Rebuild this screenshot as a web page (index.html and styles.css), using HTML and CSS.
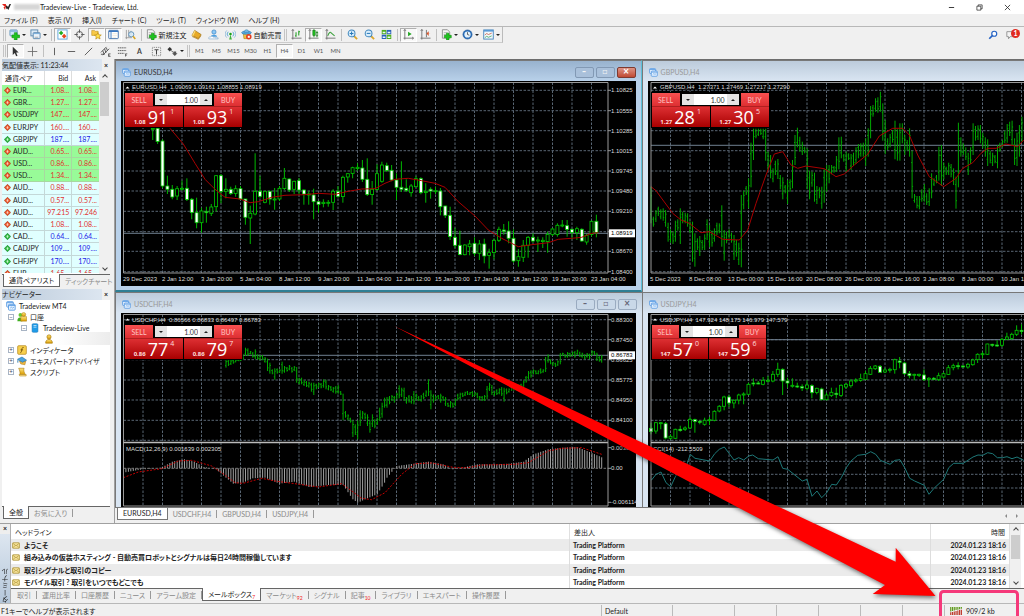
FILE: index.html
```html
<!DOCTYPE html>
<html lang="ja">
<head>
<meta charset="utf-8">
<title>Tradeview-Live - Tradeview, Ltd.</title>
<link rel="stylesheet" href="styles.css">
</head>
<body>
<svg class="defs" width="0" height="0" aria-hidden="true">
  <linearGradient id="gold" x1="0" y1="0" x2="0" y2="1"><stop offset="0" stop-color="#ffe680"/><stop offset="1" stop-color="#d99a00"/></linearGradient>
  <symbol id="i-newchart" viewBox="0 0 12 12"><rect x="1" y="1" width="8" height="6.500" rx=".8" fill="#cfe6f8" stroke="#5b8fb8" stroke-width=".9"/><path d="M1.500 2.300h7" stroke="#5b9ad0"/><path d="M5.800 4h3v2.500h2.700v3H8.800V12H5.800V9.500H3.200v-3H5.800z" fill="#1fc41f" stroke="#0a8a0a" stroke-width=".6"/></symbol>
  <symbol id="i-windows" viewBox="0 0 12 12"><rect x="1" y="1" width="7.500" height="6.500" fill="#dceaf6" stroke="#5b87ad"/><rect x="3.500" y="4" width="7.500" height="6.500" rx=".6" fill="#eaf3fa" stroke="#5b87ad"/><path d="M3.500 5h7.500" stroke="#6fa6d6"/><path d="M5 9h4" stroke="#aaa"/></symbol>
  <symbol id="i-watch" viewBox="0 0 12 12"><rect x="1" y="1" width="10" height="10" fill="#fff" stroke="#5da5dd"/><path d="M4.500 1.800L7 4.300 4.500 6.800 2 4.300z" fill="#1fae1f"/><path d="M7.800 5.300l2.500 2.500-2.500 2.500-2.500-2.500z" fill="#e8451c"/></symbol>
  <symbol id="i-cross" viewBox="0 0 12 12"><circle cx="6" cy="6" r="3.300" fill="none" stroke="#555"/><path d="M6 .5v3.700M6 7.800v3.700M.5 6h3.700M7.800 6h3.700" stroke="#555"/></symbol>
  <symbol id="i-navfold" viewBox="0 0 12 12"><path d="M.8 1.500h3l1 1h3v4.500h-7z" fill="#f7c948" stroke="#b58a1e" stroke-width=".6"/><path d="M7.500 4l1.100 2.400 2.600.2-2 1.700.7 2.600-2.400-1.400L5.200 11l.6-2.600-2-1.700 2.600-.3z" fill="#ffdf4d" stroke="#b8860b" stroke-width=".7"/></symbol>
  <symbol id="i-term" viewBox="0 0 12 12"><rect x=".8" y="1.500" width="10.400" height="9" rx=".8" fill="#fff" stroke="#3f6fa8"/><path d="M1 2.500h10" stroke="#3a78c2" stroke-width="1.500"/><path d="M3.300 3v7.500" stroke="#3a78c2"/><path d="M4.800 5h5M4.800 7h5M4.800 9h4" stroke="#f0e8d8" stroke-width=".8"/></symbol>
  <symbol id="i-tester" viewBox="0 0 12 12"><path d="M1.500 1v10M.5 9.500h7M4 1v8M6.500 2v5" stroke="#8a8a8a" stroke-width=".8"/><circle cx="6.800" cy="5.800" r="2.800" fill="#d8ecfa" fill-opacity=".8" stroke="#5b8fb8"/><path d="M8.800 8l2.400 3" stroke="#d9a520" stroke-width="1.700"/></symbol>
  <symbol id="i-order" viewBox="0 0 12 12"><path d="M1.500.8h5.500l2.500 2.500v6.700h-8z" fill="#f4f4f4" stroke="#777" stroke-width=".8"/><path d="M3 4h4M3 6h3" stroke="#999" stroke-width=".7"/><path d="M6 4.500h2.700v2.400h2.500v2.700H8.700V12H6V9.600H3.600V6.900H6z" fill="#1fc41f" stroke="#0a8a0a" stroke-width=".6"/></symbol>
  <symbol id="i-book" viewBox="0 0 12 12"><path d="M4 1.500l7 4.500-3 4.500L1 7z" fill="#e8aa28" stroke="#9a6a0a" stroke-width=".7"/><path d="M1 7l3-5.500 1 .6L2.500 7.500z" fill="#fbdc7a"/><path d="M1.300 8.200L8 11.200l3-4" fill="none" stroke="#b57c10" stroke-width=".8"/></symbol>
  <symbol id="i-person" viewBox="0 0 12 12"><circle cx="6.500" cy="3.300" r="2.300" fill="#8cc8f5" stroke="#2e7cc0" stroke-width=".7"/><path d="M3 8.500c0-3 7-3 7 0z" fill="#4da0e0"/><path d="M1 10.800c-1-1.500.5-2.500 1.500-2 .8-1.500 3-1 3.200.2 1-.6 2 0 2 .6h3.300v1.200z" fill="#fff" stroke="#6a9bc6" stroke-width=".6"/></symbol>
  <symbol id="i-signal" viewBox="0 0 12 12"><circle cx="6" cy="5.500" r="1.400" fill="#18a018"/><path d="M6 6l1.500 5.500h-3z" fill="#3fb43f"/><path d="M3.500 8a3.500 3.500 0 010-5M8.500 8a3.500 3.500 0 000-5" fill="none" stroke="#3f9ed0" stroke-width=".9"/><path d="M2 9.500a5.300 5.300 0 010-8M10 9.500a5.300 5.300 0 000-8" fill="none" stroke="#8fb8d8" stroke-width=".9"/></symbol>
  <symbol id="i-auto" viewBox="0 0 12 12"><path d="M2.500 5h6l-.8 5.500H3.200z" fill="#f0c040" stroke="#a87810" stroke-width=".6"/><ellipse cx="6" cy="4" rx="5.300" ry="1.800" fill="#5aa9dc" stroke="#1f6fa8" stroke-width=".6"/><path d="M3.500 3.500c0-3.500 5-3.500 5 0z" fill="#7cc0ea" stroke="#1f6fa8" stroke-width=".5"/><circle cx="8.500" cy="8.500" r="3" fill="#e23b20"/><rect x="7.400" y="7.400" width="2.200" height="2.200" fill="#fff"/></symbol>
  <symbol id="i-bars" viewBox="0 0 12 12"><path d="M2 .5v11M.5 10h11M.8 2l1.200-1.500L3.200 2" fill="none" stroke="#666" stroke-width=".9"/><path d="M5.500 3.500v5M4.500 7.500h1M8.500 2v5M8.500 3h1.300" stroke="#1a9a1a" stroke-width="1.100"/></symbol>
  <symbol id="i-candles" viewBox="0 0 12 12"><path d="M2 .5v11M.5 10h11M.8 2l1.200-1.500L3.200 2" fill="none" stroke="#666" stroke-width=".9"/><path d="M6.500 0v9M9.800 2v7" stroke="#107010" stroke-width=".8"/><rect x="5.300" y="1.500" width="2.500" height="5.500" fill="#20c020" stroke="#107010" stroke-width=".6"/><rect x="8.900" y="4" width="1.800" height="3.500" fill="#fff" stroke="#107010" stroke-width=".6"/></symbol>
  <symbol id="i-line" viewBox="0 0 12 12"><path d="M2 .5v11M.5 10h11M.8 2l1.200-1.500L3.200 2" fill="none" stroke="#666" stroke-width=".9"/><path d="M3 7.500C4.500 3 6 3 7 4.500l3.500 3" fill="none" stroke="#3aa03a" stroke-width="1.100"/></symbol>
  <symbol id="i-zin" viewBox="0 0 12 12"><path d="M7.500 7.500l3.500 3.500" stroke="#dba62a" stroke-width="2"/><circle cx="5" cy="4.800" r="3.700" fill="#d9eefc" stroke="#3f86bd" stroke-width="1.100"/><path d="M3 4.800h4M5 2.800v4" stroke="#2878b8" stroke-width="1.100"/></symbol>
  <symbol id="i-zout" viewBox="0 0 12 12"><path d="M7.500 7.500l3.500 3.500" stroke="#dba62a" stroke-width="2"/><circle cx="5" cy="4.800" r="3.700" fill="#d9eefc" stroke="#3f86bd" stroke-width="1.100"/><path d="M3 4.800h4" stroke="#2878b8" stroke-width="1.100"/></symbol>
  <symbol id="i-tile" viewBox="0 0 12 12"><rect x=".8" y="1" width="5" height="4.700" fill="#4fae1c"/><rect x="6.200" y="1" width="5" height="4.700" fill="#2b62b8"/><rect x=".8" y="6.200" width="5" height="4.700" fill="#2b62b8"/><rect x="6.200" y="6.200" width="5" height="4.700" fill="#4fae1c"/><path d="M1.800 3h3v1.600h-3zM7.200 3h3v1.600h-3zM1.800 8.200h3v1.600h-3zM7.200 8.200h3v1.600h-3z" fill="#e8f4ff"/></symbol>
  <symbol id="i-scroll" viewBox="0 0 12 12"><path d="M2 .5v11M.5 10h11M.8 2l1.200-1.500L3.200 2M10 8.800l1.500 1.200-1.500 1.200" fill="none" stroke="#666" stroke-width=".9"/><path d="M5.500 3l4 2.500-4 2.500z" fill="#22a522"/></symbol>
  <symbol id="i-shift" viewBox="0 0 12 12"><path d="M2 .5v11M.5 10h11M.8 2l1.200-1.500L3.200 2M7 1v8" fill="none" stroke="#666" stroke-width=".9"/><path d="M11.500 5H9.500V7.500L7 5l2.500-2.500V4.500" fill="#d8552a"/></symbol>
  <symbol id="i-clock" viewBox="0 0 12 12"><circle cx="6" cy="6" r="5" fill="#2a70bd" stroke="#174f8e" stroke-width=".6"/><circle cx="6" cy="6" r="3.400" fill="#e4f2fc"/><path d="M6 3.500V6l2 .8" fill="none" stroke="#333" stroke-width=".8"/></symbol>
  <symbol id="i-template" viewBox="0 0 12 12"><rect x=".8" y="1" width="10.400" height="10" fill="#f2f8fd" stroke="#4684bd"/><path d="M1 2h10" stroke="#4f94d4" stroke-width="1.600"/><path d="M2 6.500l2-1.500 2 1 3.500-1.500" fill="none" stroke="#c05030" stroke-width=".8"/><path d="M2 9.500l2-1.500 2 1 3.500-1.500" fill="none" stroke="#2f9f4f" stroke-width=".8"/></symbol>
  <symbol id="i-arrow" viewBox="0 0 12 12"><path d="M3 .8l6.500 6.300H6.700l1.500 3.400-1.500.7-1.500-3.500L3 9.700z" fill="#333"/></symbol>
  <symbol id="i-plusline" viewBox="0 0 12 12"><path d="M6 .8v10.400M.8 6h10.400" stroke="#666" stroke-width=".9"/></symbol>
  <symbol id="i-vline" viewBox="0 0 12 12"><path d="M6 2v8" stroke="#555"/></symbol>
  <symbol id="i-hline" viewBox="0 0 12 12"><path d="M2 6h8" stroke="#555"/></symbol>
  <symbol id="i-trend" viewBox="0 0 12 12"><path d="M2 10l8-8" stroke="#555"/></symbol>
  <symbol id="i-channel" viewBox="0 0 12 12"><path d="M1 7l6-6M3 10l7-7M3 5l1.500 4M5 3l1.500 4.500M7 2l1 3M1 9h4" stroke="#444" stroke-width=".9"/><path d="M11.500 8.500H9.300v3h2.200M9.300 10h1.800" fill="none" stroke="#333" stroke-width=".7"/></symbol>
  <symbol id="i-fibo" viewBox="0 0 12 12"><path d="M1 2h9M1 5h9M1 8h7" stroke="#555" stroke-dasharray="1.500 .5"/><path d="M11.200 8.500H9.300v3M9.300 10h1.500" fill="none" stroke="#333" stroke-width=".7"/></symbol>
  <symbol id="i-label" viewBox="0 0 12 12"><rect x="1.500" y="1.500" width="9" height="9" fill="none" stroke="#777" stroke-dasharray="1 1"/><path d="M3.800 4.200h4.400M6 4.200v5" stroke="#444" stroke-width="1.100"/></symbol>
  <symbol id="i-shapes" viewBox="0 0 12 12"><path d="M3 1l2.500 2.500L3 6 .5 3.500z" fill="#333"/><path d="M4.500 5l2.500 2" stroke="#333" stroke-width=".8"/><path d="M7 6h3v2h1.500L8.500 11 5.500 8H7z" fill="#555"/></symbol>
  <symbol id="i-chartwin" viewBox="0 0 12 12"><rect x=".8" y=".8" width="8" height="6.500" rx="1" fill="#e8f3ff" stroke="#4b93e0"/><path d="M1 2h7.500" stroke="#4b93e0"/><rect x="3" y="4" width="8" height="7" rx="1" fill="#e8f3ff" stroke="#4b93e0"/><path d="M3 5.500h8" stroke="#4b93e0"/><path d="M5 8.500l1.500-1 1.500 1 1.500-1" fill="none" stroke="#4b93e0" stroke-width=".8"/></symbol>
  <symbol id="i-down" viewBox="0 0 12 12"><path d="M6 .5L11.500 6 6 11.500.5 6z" fill="#e8532a" stroke="#a8300e"/><path d="M5 4h2v2h1.500L6 8.500 3.500 6H5z" fill="#ffc9b5"/></symbol>
  <symbol id="i-up" viewBox="0 0 12 12"><path d="M6 .5L11.500 6 6 11.500.5 6z" fill="#2fb83f" stroke="#0c7a20"/><path d="M5 8h2V6h1.500L6 3.500 3.500 6H5z" fill="#c4f3c8"/></symbol>
  <symbol id="i-user" viewBox="0 0 12 12"><circle cx="6" cy="3.500" r="2.500" fill="url(#gold)" stroke="#a87808" stroke-width=".8"/><path d="M2 11c-.5-6 8.500-6 8 0z" fill="url(#gold)" stroke="#a87808" stroke-width=".8"/></symbol>
  <symbol id="i-users" viewBox="0 0 12 12"><circle cx="4" cy="3.500" r="2.200" fill="#65c832"/><path d="M.5 11c-.5-6 6-6 6 0z" fill="#3fae1e"/><circle cx="8" cy="3" r="2.400" fill="url(#gold)" stroke="#a87808" stroke-width=".6"/><path d="M4.500 11V5.500h7V11z" fill="url(#gold)" stroke="#a87808" stroke-width=".6"/></symbol>
  <symbol id="i-server" viewBox="0 0 12 12"><rect x="2.500" y=".8" width="7" height="10.400" rx="1.300" fill="#1e9be8" stroke="#1270b4" stroke-width=".6"/><path d="M4.200 3h3.600M4.200 5h3.600" stroke="#d8f0ff" stroke-width=".9"/></symbol>
  <symbol id="i-ind" viewBox="0 0 12 12"><rect x=".8" y=".8" width="10.400" height="10.400" rx="1.200" fill="#f7cf4d" stroke="#b08010" stroke-width=".8"/><path d="M8 3C6 2.500 6 4 5.700 6S5 9.500 4 9.200M4.300 5.800h3" fill="none" stroke="#604000" stroke-width=".9"/></symbol>
  <symbol id="i-hat" viewBox="0 0 12 12"><path d="M3 6h7.500l-1 4.500-5-1z" fill="#f0b840" stroke="#a87810" stroke-width=".6"/><path d="M.5 4L6 1.200 11.500 5 6.500 7.500z" fill="#4ba3de" stroke="#1c6ca6" stroke-width=".7"/><path d="M1 5v3" stroke="#1c6ca6"/></symbol>
  <symbol id="i-script" viewBox="0 0 12 12"><path d="M2 1.500h6.500c-1 2 0 5 1.500 7.500H3.500C4 6 3 3.500 2 1.500z" fill="url(#gold)" stroke="#a87808" stroke-width=".7"/><path d="M2.500 9h8.500v1.800H3.300z" fill="#fbe08a" stroke="#a87808" stroke-width=".6"/></symbol>
  <symbol id="i-mail" viewBox="0 0 12 10"><rect x=".8" y=".8" width="10.400" height="8.400" rx="1" fill="#f3df94" stroke="#a68c2e"/><path d="M1.500 1.800L6 5.500l4.500-3.700M1.500 8.500L4.500 5M10.500 8.500L7.500 5" fill="none" stroke="#a68c2e" stroke-width=".9"/></symbol>
</svg>

<header class="titlebar">
  <svg class="logo" viewBox="0 0 12 10"><path d="M0 1h5l1 3-1 1-1 4-2-4h2z" fill="#e2231a"/><path d="M6 8L5 4l1.500-1L8 5l2-4h2L8.500 9 7 7z" fill="#222"/></svg>
  <span class="mask"></span>
  <span class="apptitle">Tradeview-Live - Tradeview, Ltd.</span>
  <div class="winctl">
    <button aria-label="最小化"><svg viewBox="0 0 8 8"><path d="M1 4h6" stroke="#222"/></svg></button>
    <button aria-label="元に戻す"><svg viewBox="0 0 8 8"><path d="M1 2.500h4.500V7H1zM2.500 2.500V1H7v4.500H5.500" fill="none" stroke="#222" stroke-width=".8"/></svg></button>
    <button aria-label="閉じる"><svg viewBox="0 0 8 8"><path d="M1 1l6 6M7 1L1 7" stroke="#222" stroke-width=".9"/></svg></button>
  </div>
</header>

<nav class="menubar">
  <button>ファイル (F)</button><button>表示 (V)</button><button>挿入(I)</button><button>チャート (C)</button><button>ツール (T)</button><button>ウィンドウ (W)</button><button>ヘルプ (H)</button>
</nav>

<div class="toolbar first">
  <div class="tools boxed">
    <i class="grip"></i>
    <button class="drop" aria-label="新規チャート"><svg><use href="#i-newchart"/></svg></button>
    <button class="drop" aria-label="チャート組表示"><svg><use href="#i-windows"/></svg></button>
    <i class="sep"></i>
    <button class="on" aria-label="気配値表示"><svg><use href="#i-watch"/></svg></button>
    <button aria-label="データウィンドウ"><svg><use href="#i-cross"/></svg></button>
    <button class="on" aria-label="ナビゲーター"><svg><use href="#i-navfold"/></svg></button>
    <button class="on" aria-label="ターミナル"><svg><use href="#i-term"/></svg></button>
    <button aria-label="ストラテジーテスター"><svg><use href="#i-tester"/></svg></button>
    <i class="sep"></i>
    <button class="text"><svg><use href="#i-order"/></svg>新規注文</button>
    <button aria-label="メタエディター"><svg><use href="#i-book"/></svg></button>
    <button aria-label="コミュニティ"><svg><use href="#i-person"/></svg></button>
    <button aria-label="シグナル"><svg><use href="#i-signal"/></svg></button>
    <button class="text"><svg><use href="#i-auto"/></svg>自動売買</button>
    <i class="grip"></i>
    <button aria-label="バーチャート"><svg><use href="#i-bars"/></svg></button>
    <button class="on" aria-label="ローソク足"><svg><use href="#i-candles"/></svg></button>
    <button aria-label="ラインチャート"><svg><use href="#i-line"/></svg></button>
    <i class="sep"></i>
    <button aria-label="ズームイン"><svg><use href="#i-zin"/></svg></button>
    <button aria-label="ズームアウト"><svg><use href="#i-zout"/></svg></button>
    <button aria-label="整列"><svg><use href="#i-tile"/></svg></button>
    <i class="sep"></i>
    <button class="on" aria-label="自動スクロール"><svg><use href="#i-scroll"/></svg></button>
    <button aria-label="チャートシフト"><svg><use href="#i-shift"/></svg></button>
    <i class="sep"></i>
    <button class="drop" aria-label="インディケータ"><svg><use href="#i-order"/></svg></button>
    <button class="drop" aria-label="周期"><svg><use href="#i-clock"/></svg></button>
    <button class="drop" aria-label="テンプレート"><svg><use href="#i-template"/></svg></button>
  </div>
  <div class="alerts">
    <button aria-label="検索"><svg viewBox="0 0 12 12"><circle cx="7.500" cy="4.500" r="3" fill="#fff" stroke="#2563c4" stroke-width="1.400"/><path d="M5.500 6.500L1.500 10.500" stroke="#2563c4" stroke-width="2"/></svg></button>
    <button class="news" aria-label="通知"><svg viewBox="0 0 12 12"><path d="M1 2h8v6H5l-2 2.500V8H1z" fill="#f4f4f4" stroke="#888"/></svg><b>1</b></button>
  </div>
</div>
<div class="toolbar">
  <div class="tools">
    <i class="grip"></i>
    <button class="on" aria-label="カーソル"><svg><use href="#i-arrow"/></svg></button>
    <button aria-label="クロスヘア"><svg><use href="#i-plusline"/></svg></button>
    <i class="sep"></i>
    <button aria-label="垂直線"><svg><use href="#i-vline"/></svg></button>
    <button aria-label="水平線"><svg><use href="#i-hline"/></svg></button>
    <button aria-label="トレンドライン"><svg><use href="#i-trend"/></svg></button>
    <button aria-label="チャネル"><svg><use href="#i-channel"/></svg></button>
    <button aria-label="フィボナッチ"><svg><use href="#i-fibo"/></svg></button>
    <button class="letter">A</button>
    <button aria-label="ラベル"><svg><use href="#i-label"/></svg></button>
    <button class="drop" aria-label="矢印"><svg><use href="#i-shapes"/></svg></button>
    <i class="grip"></i>
    <button class="tf">M1</button><button class="tf">M5</button><button class="tf">M15</button><button class="tf">M30</button><button class="tf">H1</button><button class="tf on">H4</button><button class="tf">D1</button><button class="tf">W1</button><button class="tf">MN</button>
  </div>
</div>

<main class="work">
  <aside class="dock">
    <section class="panel watch">
      <h2>気配値表示: 11:23:44<button aria-label="閉じる">×</button></h2>
      <div class="scrollbox">
        <div class="clip">
        <table class="quotes">
          <thead><tr><th>通貨ペア</th><th>Bid</th><th>Ask</th></tr></thead>
          <tbody id="quotes"></tbody>
        </table>
        </div>
        <div class="scroll"><i class="up"></i><b></b><i class="down"></i></div>
      </div>
      <div class="tabs low"><button class="active">通貨ペアリスト</button><button>ティックチャート</button></div>
    </section>
    <section class="panel nav">
      <h2>ナビゲーター<button aria-label="閉じる">×</button></h2>
      <ul class="tree">
        <li class="l0"><svg><use href="#i-chartwin"/></svg>Tradeview MT4</li>
        <li class="l1"><i>−</i><svg><use href="#i-users"/></svg>口座</li>
        <li class="l2"><i>−</i><svg><use href="#i-server"/></svg>Tradeview-Live</li>
        <li class="l3"><svg><use href="#i-user"/></svg><span class="veil"></span></li>
        <li class="l1"><i>+</i><svg><use href="#i-ind"/></svg>インディケータ</li>
        <li class="l1"><i>+</i><svg><use href="#i-hat"/></svg>エキスパートアドバイザ</li>
        <li class="l1"><i>+</i><svg><use href="#i-script"/></svg>スクリプト</li>
      </ul>
      <div class="tabs low"><button class="active">全般</button><button>お気に入り</button></div>
    </section>
  </aside>

  <div class="mdi">
    <div class="desk">
      <section class="win current">
        <header><svg><use href="#i-chartwin"/></svg><h3>EURUSD,H4</h3><div class="caps"><button aria-label="最小化">–</button><button aria-label="最大化">▫</button><button class="x" aria-label="閉じる">×</button></div></header>
        <div class="view"><svg id="eurusd" class="chart" viewBox="121 81 515 205" width="515" height="205"></svg>
          <form class="trade">
            <button type="button" class="sell">SELL</button>
            <div class="lot"><button type="button" class="less" aria-label="減らす"></button><input aria-label="EURUSD ロット" value="1.00"><button type="button" class="more" aria-label="増やす"></button></div>
            <button type="button" class="buy">BUY</button>
            <output class="price"><small>1.08</small><b>91</b><sup>1</sup></output><output class="price"><small>1.08</small><b>93</b><sup>1</sup></output>
          </form></div>
      </section>
      <section class="win">
        <header><svg><use href="#i-chartwin"/></svg><h3>GBPUSD,H4</h3></header>
        <div class="view"><svg id="gbpusd" class="chart" viewBox="647 81 376 205" width="376" height="205"></svg>
          <form class="trade">
            <button type="button" class="sell">SELL</button>
            <div class="lot"><button type="button" class="less" aria-label="減らす"></button><input aria-label="GBPUSD ロット" value="1.00"><button type="button" class="more" aria-label="増やす"></button></div>
            <button type="button" class="buy">BUY</button>
            <output class="price"><small>1.27</small><b>28</b><sup>1</sup></output><output class="price"><small>1.27</small><b>30</b><sup>5</sup></output>
          </form></div>
      </section>
      <section class="win">
        <header><svg><use href="#i-chartwin"/></svg><h3>USDCHF,H4</h3><div class="caps"><button aria-label="最小化">–</button><button aria-label="最大化">▫</button><button aria-label="閉じる">×</button></div></header>
        <div class="view"><svg id="usdchf" class="chart" viewBox="121 312 515 194" width="515" height="194"></svg>
          <form class="trade">
            <button type="button" class="sell">SELL</button>
            <div class="lot"><button type="button" class="less" aria-label="減らす"></button><input aria-label="USDCHF ロット" value="1.00"><button type="button" class="more" aria-label="増やす"></button></div>
            <button type="button" class="buy">BUY</button>
            <output class="price"><small>0.86</small><b>77</b><sup>4</sup></output><output class="price"><small>0.86</small><b>79</b><sup>7</sup></output>
          </form></div>
      </section>
      <section class="win">
        <header><svg><use href="#i-chartwin"/></svg><h3>USDJPY,H4</h3></header>
        <div class="view"><svg id="usdjpy" class="chart" viewBox="647 312 376 194" width="376" height="194"></svg>
          <form class="trade narrow">
            <button type="button" class="sell">SELL</button>
            <div class="lot"><button type="button" class="less" aria-label="減らす"></button><input aria-label="USDJPY ロット" value="1.00"><button type="button" class="more" aria-label="増やす"></button></div>
            <button type="button" class="buy">BUY</button>
            <output class="price"><small>147</small><b>57</b><sup>0</sup></output><output class="price"><small>147</small><b>59</b><sup>6</sup></output>
          </form></div>
      </section>
    </div>
    <div class="tabs charts"><button class="active">EURUSD,H4</button><button>USDCHF,H4</button><button>GBPUSD,H4</button><button>USDJPY,H4</button><span class="pager"><i></i><i></i></span></div>
  </div>
</main>

<section class="terminal">
  <div class="strip"><button aria-label="閉じる">×</button><span>ターミナル</span></div>
  <div class="inbox">
    <div class="scrollbox">
      <table class="mail">
        <thead><tr><th>ヘッドライン</th><th>差出人</th><th>時間</th></tr></thead>
        <tbody>
          <tr><td><svg><use href="#i-mail"/></svg>ようこそ</td><td>Trading Platform</td><td>2024.01.23 18:16</td></tr>
          <tr><td><svg><use href="#i-mail"/></svg>組み込みの仮装ホスティング - 自動売買ロボットとシグナルは毎日24時間稼働しています</td><td>Trading Platform</td><td>2024.01.23 18:16</td></tr>
          <tr><td><svg><use href="#i-mail"/></svg>取引シグナルと取引のコピー</td><td>Trading Platform</td><td>2024.01.23 18:16</td></tr>
          <tr><td><svg><use href="#i-mail"/></svg>モバイル取引 ? 取引をいつでもどこでも</td><td>Trading Platform</td><td>2024.01.23 18:16</td></tr>
        </tbody>
      </table>
      <div class="scroll"><i class="up"></i><b></b><i class="down"></i></div>
    </div>
    <div class="tabs low"><button>取引</button><button>運用比率</button><button>口座履歴</button><button>ニュース</button><button>アラーム設定</button><button class="active">メールボックス<sub>7</sub></button><button>マーケット<sub>92</sub></button><button>シグナル</button><button>記事<sub>10</sub></button><button>ライブラリ</button><button>エキスパート</button><button>操作履歴</button></div>
  </div>
</section>

<footer class="status">
  <span>F1キーでヘルプが表示されます</span><span>Default</span><span></span><span></span><span></span><span></span><span></span><span></span>
  <span><svg viewBox="0 0 15 9"><path d="M1 0v5M3 0v4.500M5 0v4M7 0v3.500M9 0v3M11 0v2.500M13 0v2" stroke="#5f9a1c" stroke-width="1.300"/><path d="M1 9V6M3 9V5.500M5 9V5M7 9V4.500M9 9V4M11 9V3.500M13 9V3" stroke="#c0392b" stroke-width="1.300"/></svg>909/2 kb</span>
</footer>

<svg class="callout" width="1024" height="616" viewBox="0 0 1024 616" aria-hidden="true">
  <rect x="940.500" y="591.500" width="77" height="34" rx="3" fill="none" stroke="#f5397a" stroke-width="3"/>
  <path d="M394 326L895.700 561.700V547.700L935.500 596 872.700 594 885 585z" fill="#f00"/>
</svg>
<script src="charts.js"></script>
</body>
</html>
```

FILE: styles.css
```css
* { box-sizing: border-box; }
:root {
  --ui: Lato, "Noto Sans CJK JP", sans-serif;
  --face: #f0f0f0;
  --line: #a0a0a0;
}
body {
  margin: 0;
  min-height: 100vh;
  display: flex;
  flex-direction: column;
  background: var(--face);
  color: #222;
  font: 7px/10px var(--ui);
  font-feature-settings: "palt";
  position: relative;
  overflow: hidden;
}
button, input { font: inherit; font-feature-settings: inherit; color: inherit; padding: 0; margin: 0; border: 0; background: none; white-space: nowrap; }
h2, h3, ul { margin: 0; padding: 0; font: inherit; list-style: none; }
svg { display: block; flex: none; }
i { font-style: normal; flex: none; }
.defs { position: absolute; }

.titlebar { height: 14px; background: #fff; display: flex; align-items: center; padding-left: 2px; }
.logo { width: 9px; height: 8px; }
.mask { width: 26px; height: 6px; margin-left: 3px; background: #d6d6d6; filter: blur(1px); }
.winctl { margin-left: auto; display: flex; gap: 20px; padding-right: 12px; }
.winctl button { width: 8px; height: 8px; }
.winctl svg { width: 7px; height: 7px; }

.menubar { height: 13px; display: flex; gap: 10px; padding-left: 4px; border-bottom: 1px solid #b8b8b8; }
.menubar button { line-height: 12px; }

.toolbar { height: 16px; display: flex; justify-content: space-between; }
.tools { display: flex; align-items: center; padding-left: 2px; }
.boxed { border-right: 1px solid #bbb; border-bottom: 1px solid #ccc; }
.tools button { width: 17px; height: 14px; display: flex; align-items: center; justify-content: center; }
.tools svg { width: 11px; height: 11px; }
.tools .drop { width: 21px; gap: 2px; }
.drop::after { content: ""; border: 2px solid transparent; border-top-color: #222; border-bottom: 0; }
.tools .text { width: 44px; gap: 2px; }
.tools .on { background: #f8f8f8; border: 1px solid; border-color: #b0b0b0 #fff #fff #b0b0b0; }
.grip { width: 3px; height: 12px; border: 1px solid #c4c4c4; border-width: 0 1px; margin: 0 1px; }
.sep { width: 1px; height: 12px; background: #c0c0c0; margin: 0 2px; }
.tools .tf { font-size: 6px; color: #555; }
.letter { font-weight: bold; color: #444; }
.alerts { display: flex; align-items: center; gap: 8px; padding-right: 4px; }
.alerts svg { width: 10px; height: 10px; }
.news { position: relative; width: 14px; }
.news b { position: absolute; right: 0; top: -1px; width: 9px; height: 9px; border-radius: 5px; background: #e02a20; color: #fff; font: bold 7px/9px var(--ui); }

.work { flex: 1 0 462px; display: flex; }
.dock { width: 115px; flex: none; display: flex; flex-direction: column; border-right: 1px solid var(--line); }
.panel { display: flex; flex-direction: column; padding: 0 4px 0 2px; background: var(--face); }
.panel h2 { height: 12px; line-height: 12px; display: flex; justify-content: space-between; background: linear-gradient(90deg, #bccbdb, #dfe8f2); }
.panel h2 button { width: 8px; background: var(--face); font-weight: bold; }
.watch { height: 228px; margin-bottom: 2px; }
.nav { flex: 1; padding-bottom: 3px; }
.nav h2 { height: 11px; line-height: 11px; }
.scrollbox { flex: 1; display: flex; min-height: 0; background: #fff; }
.clip { flex: 1; overflow: hidden; height: 202px; }
.scroll { width: 11px; flex: none; background: var(--face); display: flex; flex-direction: column; align-items: center; padding: 4px 0; }
.scroll b { width: 9px; height: 34px; margin: 3px 0 auto; background: #cdcdcd; }
.scroll i { width: 4px; height: 4px; border: solid #444; border-width: 1px 0 0 1px; transform: rotate(45deg); }
.scroll .down { transform: rotate(225deg); }

.quotes { width: 98px; height: 209px; border-collapse: collapse; table-layout: fixed; line-height: 9px; }
.quotes th { font-weight: normal; text-align: right; padding: 0 3px; height: 14px; border-right: 1px solid #ddd; }
.quotes th:first-child { width: 42px; text-align: left; }
.quotes td { padding: 0 2px 0 0; text-align: right; border: 1px solid #c4d8d8; border-width: 0 1px 1px 0; background: #e0ffff; color: #e23030; white-space: nowrap; }
.quotes td:first-child { text-align: left; color: #222; }
.quotes td svg { display: inline-block; width: 7px; height: 7px; margin: 0 2px; vertical-align: -1px; }
.quotes .hot td { background: #98fb98; border-color: #a8d8a0; }
.quotes .rise td + td { color: #2020e8; }

.tabs { display: flex; height: 15px; flex: none; color: #8a8a8a; }
.tabs button { padding: 0 5px; line-height: 11px; height: 12px; }
.tabs button:not(.active) { border-right: 1px solid; border-image: linear-gradient(transparent 20%, #999 20%, #999 80%, transparent 80%) 1; }
.tabs .active { background: #fff; color: #222; border: 1px solid #666; border-top: 0; }
.low { border-top: 1px solid #666; }
.low .active { margin-top: -1px; height: 13px; line-height: 13px; }
.panel .tabs { padding-left: 1px; height: 13px; }
.nav .tabs { height: 14px; }
.tabs sub { color: #f02020; font-size: 5px; line-height: 5px; vertical-align: -2px; }

.tree { flex: 1; background: #fff; }
.tree li { height: 11px; display: flex; align-items: center; gap: 3px; }
.tree svg { width: 10px; height: 10px; }
.tree i { width: 6px; height: 6px; border: 1px solid #a8b4c4; font: 6px/4px var(--ui); text-align: center; color: #446; }
.l0 { padding-left: 4px; }
.l1 { padding-left: 6px; }
.l2 { padding-left: 19px; }
.l3 { padding-left: 42px; }
.veil { flex: 1; height: 13px; background: linear-gradient(90deg, #fff, #ececec); }

.mdi { flex: 1; min-width: 0; display: flex; flex-direction: column; }
.desk { flex: 1; display: grid; grid-template-columns: 526fr 382fr; grid-template-rows: 231fr 214fr; background: #6d6d6d; padding-top: 1px; border-bottom: 1px solid #777; }
.win { min-width: 0; min-height: 0; overflow: hidden; background: #d9e5f2; border: 1px solid #787878; border-width: 1px 0 0 1px; }
.win header { height: 20px; display: flex; align-items: center; gap: 3px; padding: 2px 5px 0 6px; background: linear-gradient(#bccbdb, #d9e5f2); color: #999; }
.current { background: #b9d1ea; border-bottom: 2px solid #2f7f94; border-right: 1px solid #5cc0d8; }
.current header { background: linear-gradient(#98b2ce, #b9d1ea); color: #333; }
.win header svg { width: 9px; height: 9px; }
.caps { margin-left: auto; display: flex; gap: 2px; }
.caps button { width: 19px; height: 11px; border: 1px solid #9aabc0; border-radius: 2px; background: #c9d8e8; color: #667; font: bold 8px/8px "DejaVu Sans", sans-serif; }
.current .caps button { background: #a9c0da; border-color: #8299b4; color: #f4f4f4; }
.current .caps .x { background: linear-gradient(#dd9486, #c04a34); border-color: #7e3a30; color: #fff; }
.view { position: relative; margin: 0 3px 0 5px; }
.chart { background: #000; }
.chart text { font: 6px "Liberation Sans", sans-serif; fill: #ddd; }
.chart .tag { fill: #000; }

.trade { position: absolute; left: 3px; top: 11px; width: 119px; display: grid; grid-template-columns: 28px 30px 1px 30px 28px; grid-template-rows: 13px 21px; background: #000; border: 1px solid #000; }
.narrow { width: 116px; grid-template-columns: 27px 29px 1px 30px 27px; }
.trade .sell, .trade .buy { background: linear-gradient(#f95050, #dd2f32); color: #ffc4c4; line-height: 12px; }
.lot { grid-column: span 3; display: flex; background: #fff; margin: 1px 2px; }
.lot button { width: 12px; background: #e4e4e4; display: flex; align-items: center; justify-content: center; }
.lot button::after { content: ""; border: 2px solid transparent; }
.lot .less::after { border-top-color: #222; border-bottom: 0; }
.lot .more::after { border-bottom-color: #222; border-top: 0; }
.lot input { flex: 1; min-width: 0; text-align: right; padding-right: 2px; background: #fff; color: #333; }
.price { grid-column: span 2; display: flex; align-items: flex-end; justify-content: center; gap: 2px; color: #ffdede; background: linear-gradient(#dd2f32, #a80000); border-top: 1px solid #b02020; }
.price + .price { grid-column: 4 / span 2; }
.price small { font: bold 6px/10px "Open Sans", sans-serif; }
.price b { font: 18px/20px "Open Sans", sans-serif; color: #fff; }
.price sup { font: 7px/9px "Open Sans", sans-serif; align-self: flex-start; }

.charts { padding-left: 2px; }
.charts .active { border-color: #777; }
.pager { margin-left: auto; display: flex; gap: 9px; align-items: center; padding-right: 6px; }
.pager i { border: 2px solid transparent; border-right-color: #888; border-left: 0; }
.pager i + i { border: 2px solid transparent; border-left-color: #888; border-right: 0; }

.terminal { height: 80px; display: flex; border-top: 1px solid var(--line); }
.strip { width: 10px; display: flex; flex-direction: column; justify-content: space-between; background: linear-gradient(#eee 10px, #dde6f0 10px, #b5c7da); }
.strip button { font-weight: bold; line-height: 8px; }
.strip span { writing-mode: vertical-rl; transform: rotate(180deg); line-height: 10px; }
.inbox { flex: 1; display: flex; flex-direction: column; min-width: 0; border-left: 1px solid #b0b0b0; }
.inbox .scroll { margin-right: 3px; }
.inbox .scroll b { height: 24px; }
.inbox .tabs { padding-left: 1px; }
.mail { flex: 1; border-collapse: collapse; table-layout: fixed; line-height: 10px; }
.mail th { height: 15px; font-weight: normal; text-align: left; padding: 0 4px; border-right: 1px solid #e0e0e0; }
.mail th:nth-child(2) { width: 361px; }
.mail th:nth-child(3) { width: 79px; text-align: right; }
.mail td { height: 12px; padding: 0 3px; font-weight: bold; white-space: nowrap; border-right: 1px solid #ddd; }
.mail td:last-child { text-align: right; }
.mail td:first-child { padding-left: 1px; }
.mail tbody tr:nth-child(odd) { background: #ebebeb; }
.mail td svg { display: inline-block; width: 8px; height: 7px; margin-right: 4px; vertical-align: -1px; }

.status { height: 15px; display: flex; align-items: center; border-top: 1px solid #b8b8b8; }
.status span { width: 42px; height: 12px; line-height: 12px; padding-left: 3px; border-left: 1px solid #bbb; display: flex; gap: 2px; align-items: center; white-space: nowrap; }
.status span:first-child { flex: 1; border: 0; padding-left: 1px; }
.status span:nth-child(2) { width: 71px; }
.status span:nth-child(3) { width: 62px; }
.status span:last-child { width: 80px; padding-left: 4px; }
.status svg { width: 15px; height: 8px; }

.callout { position: absolute; left: 0; top: 0; pointer-events: none; }
.callout path { filter: drop-shadow(1px 2px 2px rgba(0, 0, 0, .55)); }
```

FILE: charts.js
```javascript
// Quotes list: symbol, bid, ask, highlighted, rising
const quotes = [
  ["EUR...", "1.08...", "1.08...", 1, 0], ["GBR...", "1.27...", "1.27...", 1, 0], ["USDJPY", "147....", "147....", 1, 0],
  ["EURJPY", "160....", "160....", 0, 0], ["GBPJPY", "187....", "187....", 0, 1], ["AUD...", "0.65...", "0.65...", 1, 0],
  ["USD...", "0.86...", "0.86...", 1, 0], ["USD...", "1.34...", "1.34...", 1, 0], ["AUD...", "0.88...", "0.88...", 0, 0],
  ["AUD...", "0.57...", "0.57...", 0, 0], ["AUD...", "97.215", "97.246", 0, 0], ["AUD...", "1.08...", "1.08...", 0, 0],
  ["CAD...", "0.64...", "0.64...", 0, 1], ["CADJPY", "109....", "109....", 0, 1], ["CHFJPY", "170....", "170....", 0, 1],
  ["EUR...", "1.65...", "1.65...", 0, 0]
];
document.getElementById("quotes").innerHTML = quotes.map(([s, b, a, hot, rise]) =>
  `<tr class="${hot ? "hot " : ""}${rise ? "rise" : ""}"><td><svg><use href="#i-${rise ? "up" : "down"}"/></svg>${s}</td><td>${b}</td><td>${a}</td></tr>`).join("");

// Chart data is stored at three units per pixel, relative to each chart's origin.
const GRID = 19.5;
function chart(id, o) {
  const X = v => (o.ox + v / 3).toFixed(1), Y = v => (o.oy + v / 3).toFixed(1);
  const line = (x1, y1, x2, y2, c, extra = "") => `<path d="M${x1} ${y1}L${x2} ${y2}" stroke="${c}" ${extra}/>`;
  const poly = (pts, c, extra = "") => `<path d="M${pts.map(p => X(p[0]) + " " + Y(p[1])).join("L")}" fill="none" stroke="${c}" ${extra}/>`;
  const dash = 'stroke-dasharray="2.500 1.500"', g = "#596673";
  let s = "";
  for (let x = o.left + GRID; x < o.right; x += GRID) s += line(x, o.top, x, o.bottom, g, dash);
  o.rows.forEach(y => { s += line(o.left, Y(y), o.right, Y(y), g, dash); });
  s += line(o.left, Y(o.bid), o.right, Y(o.bid), "#708090");
  (o.candles || []).forEach(([k, t, hi, a, b, lo]) => {
    const x = o.left + k * 4.875;
    s += line(x, Y(hi), x, Y(lo), "#00b800");
    const h = Math.max((b - a) / 3, 1);
    s += `<rect x="${(x - 1.5).toFixed(1)}" y="${Y(a)}" width="3" height="${h.toFixed(1)}" fill="${t === "d" ? "#fff" : "#000"}" stroke="#00c800" stroke-width=".8"/>`;
  });
  if (o.bars) {
    let d = "";
    o.bars.forEach(([hi, lo], i) => {
      const x = o.left + (o.start + i) * 2.44, q = (lo - hi) / 4;
      d += `M${x.toFixed(1)} ${Y(hi)}V${Y(lo)}M${(x - 1).toFixed(1)} ${Y(i % 2 ? hi + q : lo - q)}h1M${x.toFixed(1)} ${Y(i % 2 ? lo - q : hi + q)}h1`;
    });
    s += `<path d="${d}" stroke="#00a800" fill="none"/>`;
  }
  if (o.ma) s += poly(o.ma, "#a80000");
  if (o.hist) {
    let d = "";
    for (let i = 1; i < o.hist.length; i++) {
      const [k0, v0] = o.hist[i - 1], [k1, v1] = o.hist[i];
      for (let k = k0; k < k1; k++) d += `M${(o.left + k * 2.44).toFixed(1)} ${Y(532)}V${Y(v0 + (v1 - v0) * (k - k0) / (k1 - k0))}`;
    }
    s += `<path d="${d}" stroke="#a0a0a0"/>` + line(o.left, Y(532), o.right, Y(532), "#777", dash);
    s += poly(o.signal, "#c80000", 'stroke-dasharray="2 1.500"');
  }
  if (o.cci) s += poly(o.cci, "#1e7878");
  s += `<path d="M${o.left} ${o.top}H${o.right}V${o.bottom}H${o.left}z" fill="none" stroke="#999"/>`;
  if (o.split) s += line(o.left, o.split, o.right, o.split, "#bbb", 'stroke-width="1.500"');
  o.texts.forEach(([x, y, t]) => { s += `<text x="${x}" y="${y}" xml:space="preserve">${t}</text>`; });
  if (o.prices) o.prices.forEach(([t, y]) => { s += line(o.right, Y(y), o.right + 3, Y(y), "#999") + `<text x="611" y="${(+Y(y) + 2).toFixed(1)}">${t}</text>`; });
  if (o.tag) s += `<rect x="609" y="${(+Y(o.bid) - 4).toFixed(1)}" width="26" height="8" fill="#fff"/><text class="tag" x="611" y="${(+Y(o.bid) + 2).toFixed(1)}">${o.tag}</text>`;
  s += `<path d="M${o.left + 2} ${o.top + 6}l2-2 2 2z" fill="#fff"/>`;
  document.getElementById(id).innerHTML = s;
}
const parse = str => str.trim().split(/\s+/).map(r => r.split(",").map(Number));
const parseC = str => str.trim().split(/\s+/).map(r => { const p = r.split(","); return [0, p[0], ...p.slice(1).map(Number)]; });
const indexed = (list, k) => list.map((c, i) => { c[0] = k + i; return c; });
const rows10 = [91, 152, 212, 272, 333, 393, 454, 515, 574, 635];
const rows7 = [86, 146, 206, 267, 327, 388, 448];
const dates = (names, x0, step) => names.map((n, i) => [x0 + i * step, 281, n]);

chart("eurusd", {
  ox: 115, oy: 60, left: 123.5, right: 608, top: 82.5, bottom: 273, rows: rows10, bid: 520, tag: "1.08919",
  candles: indexed(parseC(`u,205,205,206,240 d,205,205,245,252 d,238,243,378,385 d,347,378,388,402 d,375,388,411,418 u,378,386,408,420
    u,362,385,387,392 d,355,385,419,423 d,414,418,458,478 d,413,458,488,505 u,443,453,488,518 d,440,455,458,488 u,432,441,460,468
    u,345,347,440,455 d,342,347,394,430 u,355,388,394,415 d,380,388,401,405 u,376,386,400,410 d,378,386,417,420 d,417,417,472,494
    u,437,460,474,552 u,280,394,462,466 d,347,394,409,413 u,393,394,427,430 d,393,394,417,434 u,384,417,419,449 u,378,385,417,423
    u,324,355,386,390 d,355,357,390,396 u,362,364,388,402 d,354,362,390,402 d,388,390,402,434 u,394,402,405,434 d,386,405,425,478
    d,423,425,433,458 u,418,427,431,442 u,420,427,430,440 u,388,394,427,450 d,378,394,409,413 u,347,352,410,428 u,340,341,351,368
    u,320,323,340,355 u,310,322,326,332 d,300,324,358,366 d,295,358,404,408 u,363,388,404,434 u,313,341,388,392 u,305,315,364,368
    d,308,317,331,336 d,315,331,360,364 d,340,360,382,420 d,304,382,388,396 d,358,385,391,396 u,372,378,398,410 u,348,356,380,382
    d,352,356,398,403 u,370,394,398,428 d,382,388,393,416 u,380,392,394,402 d,384,393,440,466 d,437,438,466,474 d,440,466,530,540
    d,503,532,556,564 d,512,556,584,586 u,553,555,584,586 u,540,552,560,586 d,532,550,580,588 u,540,552,580,600 d,536,552,588,610
    u,566,578,586,626 u,536,541,578,598 u,500,508,541,546 d,492,510,514,524 d,484,513,535,550 d,508,535,603,608 u,567,590,602,620
    u,540,556,592,606 u,528,532,556,593 d,520,532,543,548 u,530,540,543,576 u,532,541,545,564 u,515,523,545,578 u,504,507,524,528
    u,490,496,524,530 u,480,495,498,502 d,480,497,508,530 d,506,508,518,538 u,500,506,518,540 d,505,508,543,545 u,522,526,546,554
    u,482,484,524,530 d,464,484,518,532`), 6),
  ma: parse(`165,205 205,252 240,310 270,358 300,388 330,412 375,417 405,428 430,425 470,412 510,406 570,404 610,400 660,403 700,394
    740,387 780,386 810,370 840,358 880,355 920,362 960,370 990,382 1030,425 1080,468 1120,510 1160,535 1210,560 1250,554 1300,548
    1330,538 1370,535 1400,532 1430,520 1450,518`),
  prices: ["1.10825", "1.10555", "1.10285", "1.10015", "1.09745", "1.09480", "1.09210", "", "1.08670", "1.08400"].map((t, i) => [t, rows10[i]]),
  texts: [[132, 89, "EURUSD,H4  1.09069 1.09161 1.08855 1.08919"],
    ...dates(["29 Dec 2023", "2 Jan 12:00", "3 Jan 20:00", "5 Jan 04:00", "8 Jan 12:00", "9 Jan 20:00", "11 Jan 04:00", "12 Jan 12:00", "15 Jan 20:00", "17 Jan 04:00", "18 Jan 12:00", "19 Jan 20:00", "23 Jan 04:00"], 123, 39)]
});

chart("gbpusd", {
  ox: 640, oy: 60, left: 650, right: 1030, top: 82.5, bottom: 273, rows: rows10, bid: 256, start: 0,
  bars: parse(`380,490 470,500 450,486 440,468 448,478 445,482 450,500 488,545 508,548 515,552 482,545 478,512 445,552 455,490 458,490
    460,500 484,520 485,605 520,620 535,570 528,588 540,570 523,570 478,540 495,562 512,560 505,545 488,525 490,520 436,560 510,602
    515,550 508,535 518,548 525,600 540,590 548,615 405,622 392,448 378,405 355,445 248,382 206,300 206,235 206,228 206,225 206,238
    206,302 275,330 285,355 325,367 302,345 297,357 345,388 352,418 375,400 360,432 358,395 300,385 225,315 203,262 230,275 245,285
    260,280 265,388 332,418 335,380 338,425 378,432 382,415 380,446 328,428 315,395 315,370 315,343 318,338 288,335 232,328 230,295
    282,305 275,335 280,300 282,330 278,318 262,312 252,295 250,290 248,290 235,318 205,290 138,235 135,170 115,155 112,158 95,155
    130,242 180,282 235,270 222,262 210,248 182,298 208,302 190,302 190,250 225,285 240,272 205,290 272,415 402,428 408,445 408,448
    388,425 372,425 400,435 385,438 340,415 355,378 345,370 260,362 255,378 308,358 320,345 308,345 312,352 325,375 350,446 188,382
    232,290 250,285 262,300 278,345 262,312 190,285 198,242 196,240 195,250 218,265 232,290 238,318 272,310 278,318 285,310 255,325
    248,275 240,262 212,250 192,248 185,228 182,258 235,315 218,318 195,290 170,245`),
  ma: parse(`30,380 45,392 95,460 120,480 145,490 180,518 205,515 245,538 295,540 320,510 345,430 375,345 400,282 425,275 450,315
    470,325 495,318 550,326 585,350 610,342 640,315 680,283 715,228 755,205 785,205 805,225 830,285 865,350 908,380 945,355 965,325
    995,308 1020,280 1040,265 1065,265 1095,252 1130,260 1148,240`),
  texts: [[659, 89, "GBPUSD,H4  1.27371 1.27469 1.27217 1.27290"],
    ...dates(["5 Dec 2023", "8 Dec 08:00", "13 Dec 00:00", "15 Dec 16:00", "20 Dec 08:00", "26 Dec 00:00", "28 Dec 16:00", "3 Jan 08:00", "8 Jan 00:00", "10 Jan 16:00"], 649, 39)]
});

chart("usdchf", {
  ox: 115, oy: 290, left: 123.5, right: 608, top: 313.5, bottom: 505, split: 441.5, rows: rows7, bid: 193, tag: "0.86783", start: 42,
  bars: parse(`206,230 206,225 206,222 206,218 206,214 206,210 206,210 190,206 170,195 172,195 180,190 183,200 175,204 190,206 192,208
    192,208 198,215 203,240 215,248 235,250 232,266 232,248 235,245 212,248 225,245 228,242 222,238 228,245 225,240 228,275 260,280
    260,280 268,285 270,288 272,290 275,302 275,312 278,295 275,290 276,292 265,290 266,295 282,298 285,300 288,305 285,308 282,308
    300,312 308,388 360,380 370,388 380,395 388,438 400,432 388,445 358,405 360,385 365,385 370,405 388,425 370,408 385,412 380,402
    350,390 335,380 320,350 318,350 315,340 312,330 315,335 305,325 283,322 290,318 290,330 318,338 312,335 315,338 300,340 308,328
    315,330 312,332 305,325 298,318 265,315 298,355 310,335 315,328 312,325 308,335 315,330 318,345 335,348 330,350 335,350 322,345
    308,328 305,325 305,318 302,315 300,312 303,312 300,318 303,315 305,322 315,328 315,330 312,330 285,325 275,300 282,312 300,315
    295,312 292,310 288,315 290,332 292,310 292,305 285,300 280,300 285,298 280,295 278,292 268,288 255,275 240,265 238,260 235,250
    238,250 238,250 232,248 235,245 198,243 190,215 205,220 212,225 215,228 208,225 186,220 185,195 190,200 183,200 185,198 182,195
    180,200 176,192 182,198 185,200 190,205 186,200 188,205 178,195 180,192 185,210 195,212 192,215`),
  hist: parse(`0,545 3,541 8,535 14,532 16,528 20,512 25,505 29,512 33,528 36,532 38,535 42,560 45,578 49,575 53,562 58,560 64,578 70,572
    76,588 84,582 90,582 94,625 96,635 100,622 104,610 107,575 108,560 112,525 117,520 125,512 131,520 135,535 140,528 145,520
    152,520 158,518 164,512 168,490 174,475 180,470 186,468 190,480 197,502`),
  signal: parse(`25,560 70,543 140,533 190,510 230,508 290,525 330,552 360,575 385,577 440,562 480,570 540,578 610,588 680,578 740,622
    770,626 810,605 860,550 900,518 950,516 1020,530 1060,530 1100,522 1200,520 1240,515 1300,480 1340,472 1400,470 1460,490`),
  prices: [["0.88300", 86], ["0.87450", 146], ["0.86625", 206], ["0.85775", 267], ["0.84950", 327], ["0.84100", 388], ["0.003015", 470], ["0.00", 532], ["-0.006114", 634]],
  texts: [[132, 321, "USDCHF,H4  0.86566 0.86833 0.86497 0.86783"], [126, 450, "MACD(12,26,9) 0.001639 0.002305"]]
});

chart("usdjpy", {
  ox: 640, oy: 290, left: 650, right: 1030, top: 313.5, bottom: 505, split: 441.5, rows: [...rows7, 511, 550, 591], bid: 146,
  candles: indexed(parseC(`d,395,412,422,430 u,393,395,420,428 u,393,395,398,415 d,393,398,441,445 u,430,436,442,446 u,413,415,442,444
    d,404,415,419,422 u,406,411,415,420 u,378,385,411,414 d,383,386,391,425 d,388,391,393,400 u,380,388,400,404 u,378,386,389,402
    u,358,361,388,391 u,342,346,360,364 u,314,318,346,358 d,312,318,336,348 u,325,328,336,352 u,308,312,327,340 u,304,309,311,340
    u,275,280,310,312 d,262,276,278,286 d,270,276,278,280 u,258,268,280,283 u,255,268,271,275 u,240,250,270,274 u,215,235,250,258
    d,232,235,270,312 d,260,270,276,290 u,262,283,286,290 d,275,285,288,291 d,280,287,291,300 u,268,282,292,298 d,280,284,305,322
    u,290,292,305,310 d,290,294,326,328 u,305,312,326,328 u,290,304,314,318 d,290,307,311,322 u,280,283,314,318 u,276,280,288,293
    u,264,270,284,290 u,262,267,270,275 u,248,263,268,272 u,240,248,265,268 u,225,232,250,252 u,222,225,233,237 d,222,226,244,246
    u,230,237,243,246 u,230,235,238,245 u,203,206,236,248 d,198,210,214,232 d,212,216,248,252 d,240,248,254,262 u,248,250,253,268
    u,248,250,254,258 d,235,252,266,270 u,258,262,266,288 d,258,262,264,268 u,245,254,266,270 u,244,248,258,260 u,222,230,250,252
    u,218,224,230,238 d,214,224,226,235 d,222,225,227,230 u,215,220,228,233 u,203,207,221,224 u,187,190,206,216 u,182,188,191,202
    u,158,159,190,192 d,158,160,163,168 d,148,162,164,168 u,140,145,163,168 u,125,138,145,147 u,125,130,143,147 u,103,118,130,135
    d,100,118,122,130`), 0),
  cci: parse(`31,568 45,550 60,543 75,575 89,587 104,555 118,540 133,535 148,490 162,502 206,510 221,488 235,475 250,468 279,507
    293,500 308,507 323,495 335,492 352,503 396,507 411,497 425,532 440,535 484,570 498,565 513,616 528,600 542,620 557,605 572,580
    586,582 601,560 616,530 630,510 650,493 674,490 689,482 704,490 718,508 747,520 762,508 777,506 791,530 806,562 821,570 850,583
    864,610 879,592 908,565 923,530 938,517 967,517 996,498 1011,492 1025,493 1040,485 1055,488 1069,500 1084,500 1098,497
    1113,503 1128,498 1148,508`),
  texts: [[659, 321, "USDJPY,H4  147.924 148.175 146.979 147.579"], [652, 450, "CCI(14) -212.5509"]]
});
```
